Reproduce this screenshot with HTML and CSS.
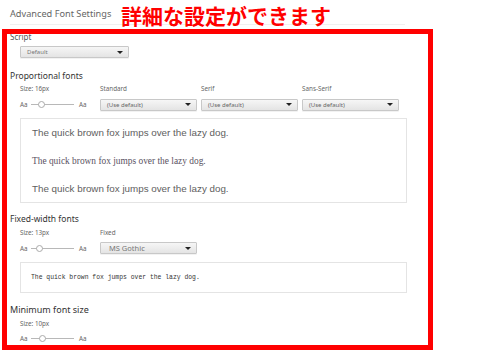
FILE: index.html
```html
<!DOCTYPE html>
<html lang="ja">
<head>
<meta charset="utf-8">
<link rel="stylesheet" href="styles.css">
</head>
<body>
<div class="page">
  <div class="header"><h1 class="title">Advanced Font Settings</h1></div>

  <h2 class="head head-script">Script</h2>
  <div class="select sel-script"><span>Default</span><i class="arrow"></i></div>

  <h2 class="head head-prop">Proportional fonts</h2>
  <div class="cols labels">
    <span class="c-size">Size: 16px</span>
    <span class="c-col">Standard</span>
    <span class="c-col">Serif</span>
    <span class="c-col">Sans-Serif</span>
  </div>
  <div class="cols controls">
    <div class="c-size slider"><span class="aa">Aa</span><span class="track"><i class="thumb" style="left:7px"></i></span><span class="aa">Aa</span></div>
    <div class="c-col"><div class="select"><span>(Use default)</span><i class="arrow"></i></div></div>
    <div class="c-col"><div class="select"><span>(Use default)</span><i class="arrow"></i></div></div>
    <div class="c-col"><div class="select"><span>(Use default)</span><i class="arrow"></i></div></div>
  </div>
  <div class="sample sample-prop">
    <p class="s-sans">The quick brown fox jumps over the lazy dog.</p>
    <p class="s-serif">The quick brown fox jumps over the lazy dog.</p>
    <p class="s-sans">The quick brown fox jumps over the lazy dog.</p>
  </div>

  <h2 class="head head-fixed">Fixed-width fonts</h2>
  <div class="cols labels labels-fixed">
    <span class="c-size">Size: 13px</span>
    <span class="c-col">Fixed</span>
  </div>
  <div class="cols controls controls-fixed">
    <div class="c-size slider"><span class="aa">Aa</span><span class="track"><i class="thumb" style="left:5px"></i></span><span class="aa">Aa</span></div>
    <div class="c-col"><div class="select sel-fixed"><span>MS Gothic</span><i class="arrow"></i></div></div>
  </div>
  <div class="sample sample-mono">
    <p class="s-mono">The quick brown fox jumps over the lazy dog.</p>
  </div>

  <h2 class="head head-min">Minimum font size</h2>
  <div class="cols labels labels-min">
    <span class="c-size">Size: 10px</span>
  </div>
  <div class="cols controls controls-min">
    <div class="c-size slider"><span class="aa">Aa</span><span class="track"><i class="thumb" style="left:8px"></i></span><span class="aa">Aa</span></div>
  </div>
</div>
<div class="note">詳細な設定ができます</div>
<div class="frame"></div>
</body>
</html>
```
FILE: styles.css
```css
html, body { margin: 0; padding: 0; background: #fff; }
body { font-family: "Noto Sans", "Open Sans", sans-serif; color: #444; width: 500px; height: 350px; overflow: hidden; position: relative; }
.page { padding-left: 10px; }
h1, h2, p { margin: 0; font-weight: normal; }

.header { width: 395px; height: 25px; border-bottom: 1px solid #f0f0f0; box-sizing: border-box; }
.title { font-size: 9.2px; line-height: 12px; padding-top: 8px; color: #666; }

.head { font-size: 8.5px; line-height: 10px; color: #333; }
.head-script { margin-top: 7px; font-size: 8px; color: #555; }
.head-prop { margin-top: 13px; }
.head-fixed { margin-top: 11px; }
.head-min { margin-top: 12px; font-size: 9px; }

.select { box-sizing: border-box; height: 12px; border: 1px solid #c8c8c8; border-radius: 1px; background: linear-gradient(#f6f6f6, #e4e4e4); box-shadow: 0 1px 0 rgba(0,0,0,0.05); display: flex; align-items: center; justify-content: space-between; padding: 0 5px 0 6px; font-size: 6px; color: #666; }
.sel-script { margin: 4px 0 0 10px; width: 109px; color: #777; }
.sel-fixed { font-size: 7.5px; color: #777; padding-left: 8px; height: 12px; }
.arrow { width: 0; height: 0; border-left: 3px solid transparent; border-right: 3px solid transparent; border-top: 3px solid #222; }

.cols { display: flex; padding-left: 10px; }
.c-size { width: 80px; flex: none; }
.c-col { width: 101px; flex: none; }
.c-col .select { width: 97px; }
.labels { margin-top: 3px; font-size: 6.3px; line-height: 10px; color: #666; }
.labels-fixed, .labels-min { margin-top: 4px; }
.controls { margin-top: 4px; height: 13px; align-items: center; }
.controls-fixed { height: 12px; }
.controls-min { height: 10px; }

.slider { display: flex; align-items: center; font-size: 6.3px; color: #666; }
.aa { width: 11px; }
.slider .aa:last-child { margin-left: 5px; }
.track { position: relative; width: 43px; height: 1px; background: #b8b8b8; }
.thumb { position: absolute; top: -3px; width: 7px; height: 7px; border: 1px solid #aaa; border-radius: 50%; background: #fff; box-sizing: border-box; }

.sample { margin-left: 10px; width: 387px; box-sizing: border-box; border: 1px solid #e4e4e4; }
.sample-prop { margin-top: 7px; height: 85px; padding-left: 11px; }
.sample-prop p { line-height: 28px; }
.s-sans { font-family: "Liberation Sans", Arial, sans-serif; font-size: 9.8px; color: #606060; }
.s-serif { font-family: "Liberation Serif", serif; font-size: 9.4px; color: #5a5262; }
.sample-mono { margin-top: 8px; height: 31px; padding-left: 10px; }
.s-mono { font-family: "Liberation Mono", monospace; font-size: 6.4px; line-height: 29px; color: #333; }

.note { position: absolute; left: 121px; top: 1px; font-family: "Noto Sans CJK JP", sans-serif; font-weight: 700; font-size: 21px; line-height: 28px; color: #ff0000; white-space: nowrap; }
.frame { position: absolute; left: 2px; top: 29px; width: 431px; height: 321px; box-sizing: border-box; border: 5px solid #ff0000; pointer-events: none; }
```
